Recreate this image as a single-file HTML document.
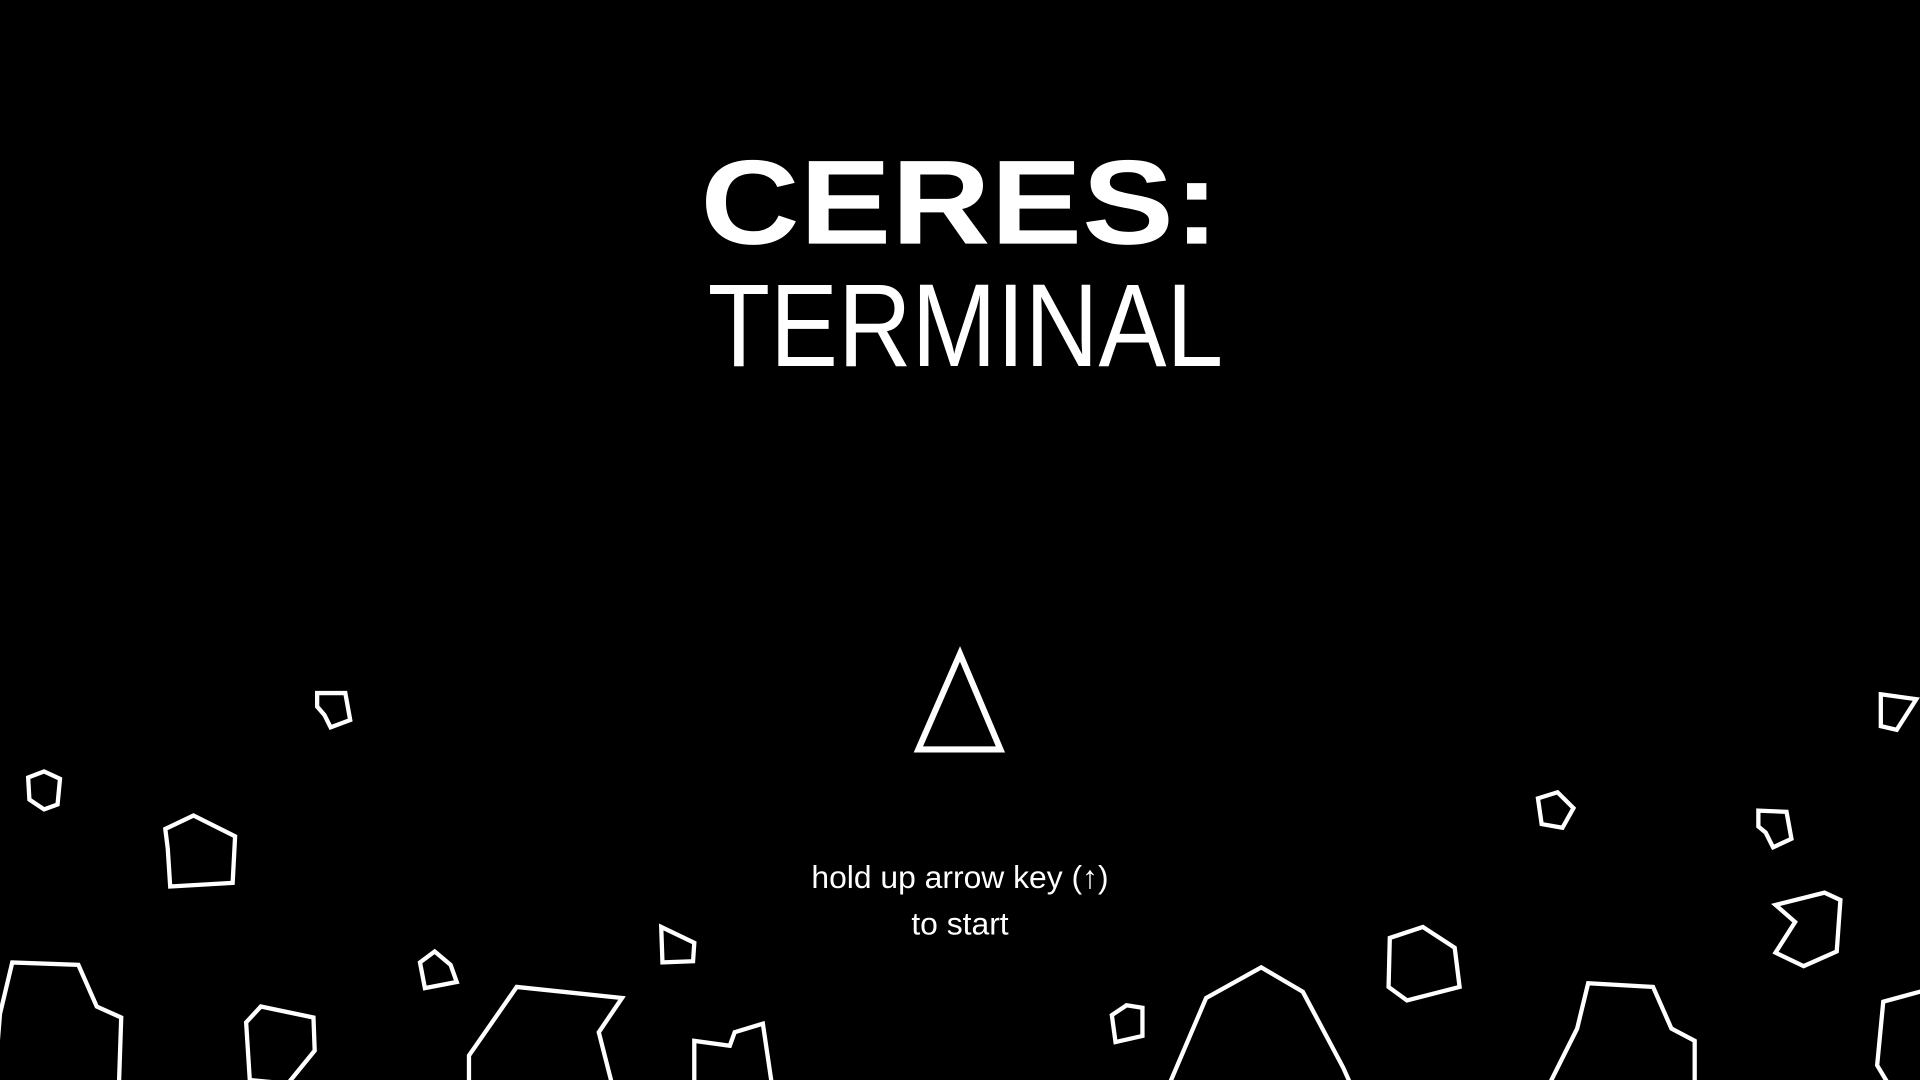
<!DOCTYPE html>
<html><head><meta charset="utf-8"><style>
html,body{margin:0;padding:0;background:#000;overflow:hidden;width:1920px;height:1080px}
svg{display:block}
</style></head><body>
<svg width="1920" height="1080" viewBox="0 0 1568 882" xmlns="http://www.w3.org/2000/svg">
<rect width="1568" height="882" fill="#000"/>
<text x="572" y="199" font-family="Liberation Sans, sans-serif" font-weight="bold" font-size="98" fill="#fff" textLength="424" lengthAdjust="spacingAndGlyphs">CERES:</text>
<text x="578" y="299" font-family="Liberation Sans, sans-serif" font-size="96" fill="#fff" textLength="421" lengthAdjust="spacingAndGlyphs">TERMINAL</text>
<g font-family="Liberation Sans, DejaVu Sans, sans-serif" font-size="26" fill="#fff" text-anchor="middle">
<text x="784" y="725">hold up arrow key (↑)</text>
<text x="784" y="763">to start</text>
</g>
<g fill="none" stroke="#fff" stroke-width="3.5" stroke-linejoin="miter">
<polygon points="750,612 784,534 817,612" stroke-width="5"/>
<polygon points="259,566 282,566 286,588 270,594 265,584 259,577"/>
<polygon points="23,635 36,630 49,636 47,657 36,661 24,653"/>
<polygon points="135,677 158,666 192,683 190,721 139,724 137,693"/>
<polygon points="-5,890 0,828 10,786 64,788 79,822 99,831 97,890"/>
<polygon points="343,786 355,777 368,788 373,802 347,807"/>
<polygon points="540,757 567,770 566,785 541,786"/>
<polygon points="201,835 213,822 256,831 257,858 235,885 204,882"/>
<polygon points="383,890 383,862 422,806 508,815 489,843 501,890"/>
<polygon points="567,890 567,850 596,854 600,843 623,836 631,890"/>
<polygon points="908,829 920,821 933,823 933,846 911,851"/>
<polygon points="953,890 985,815 1030,790 1064,810 1097,872 1105,890"/>
<polygon points="1135,766 1162,757 1188,774 1192,806 1149,817 1134,806"/>
<polygon points="1256,652 1272,647 1285,660 1276,676 1259,673"/>
<polygon points="1436,662 1459,663 1463,685 1448,692 1442,680 1436,675"/>
<polygon points="1450,739 1490,729 1503,735 1500,777 1473,789 1450,778 1466,753"/>
<polygon points="1263,890 1288,840 1297,803 1350,806 1365,840 1384,850 1384,890"/>
<polygon points="1536,567 1565,571 1549,596 1536,593"/>
<polygon points="1545,890 1533,870 1538,818 1575,808 1575,890"/>
</g>
</svg>
</body></html>
